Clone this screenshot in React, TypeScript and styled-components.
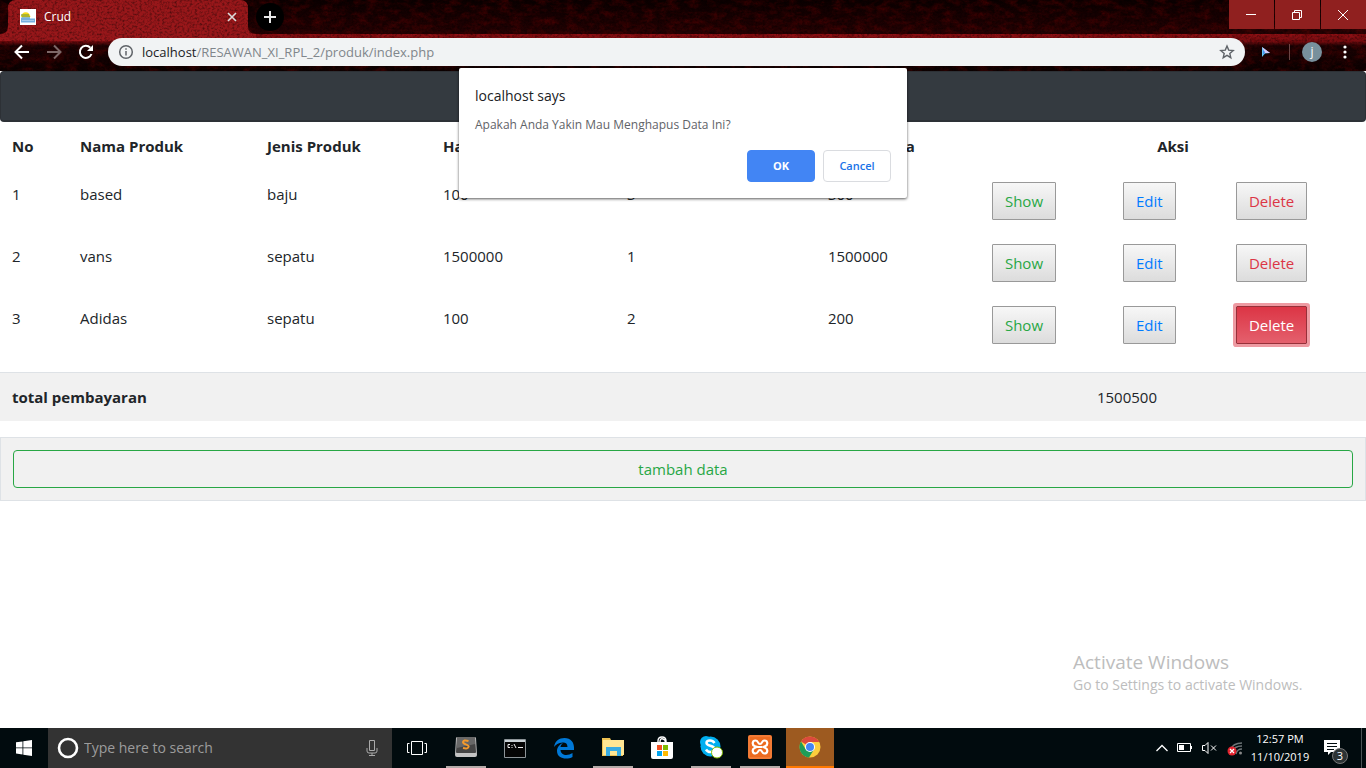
import React from "react";
import styled, { createGlobalStyle, css } from "styled-components";

const Global = createGlobalStyle`
  * { box-sizing: border-box; }
  body { margin: 0; background: #fff; color: #212529; font: 15px/24px "Open Sans", "Noto Sans", sans-serif; }
  button, input { font: inherit; }
`;

const Desktop = styled.div`
  min-height: 100vh;
  display: flex;
  flex-direction: column;
`;

/* Browser frame */
const Chrome = styled.header`
  position: relative;
  background: #120102;
  color: #fff;
`;
const Texture = styled.svg`
  position: absolute;
  inset: 0;
  width: 100%;
  height: 100%;
`;
const TabStrip = styled.div`
  position: relative;
  display: flex;
  height: 34px;
  padding-left: 8px;
`;
const Tab = styled.div`
  display: flex;
  align-items: center;
  width: 240px;
  padding: 0 10px 0 12px;
  gap: 8px;
  font-size: 12px;
`;
const TabTitle = styled.span`
  flex: 1;
`;
const PlainButton = styled.button`
  display: flex;
  align-items: center;
  justify-content: center;
  padding: 0;
  border: 0;
  background: none;
  color: inherit;
`;
const NewTab = styled(PlainButton)`
  width: 28px;
  height: 28px;
  margin: 3px 0 0 8px;
  border-radius: 50%;
  background: #000;
`;
const WindowControls = styled.div`
  display: flex;
  gap: 1px;
  margin-left: auto;
`;
const WindowButton = styled(PlainButton)`
  width: 45px;
  height: 29px;
  padding-right: 2px;
  background: #90201f;
`;
const Toolbar = styled.div`
  position: relative;
  display: flex;
  align-items: center;
  height: 37px;
  padding: 0 13px 1px 14px;
`;
const NavButtons = styled.div`
  display: flex;
  gap: 16px;
  margin-right: 14px;
`;
const AddressBar = styled.div`
  display: flex;
  flex: 1;
  align-items: center;
  height: 28px;
  padding: 0 10px;
  border-radius: 14px;
  background: #f1f3f4;
  color: #5f6368;
`;
const Address = styled.div`
  flex: 1;
  margin-left: 8px;
  color: #80868b;
  font-size: 13px;
  span { color: #202124; }
`;
const Avatar = styled(PlainButton)`
  width: 20px;
  height: 20px;
  border-radius: 50%;
  background: #78909c;
  font-size: 12px;
  line-height: 20px;
`;
const Divider = styled.span`
  width: 1px;
  height: 16px;
  margin: 0 12px 0 16px;
  background: #6b4645;
`;
const MenuButton = styled(PlainButton)`
  width: 4px;
  margin: 0 6px 0 21px;
`;

/* Page */
const Page = styled.main`
  position: relative;
  display: flex;
  flex: 1;
  flex-direction: column;
`;
const Navbar = styled.nav`
  height: 51px;
  border: 1px solid #2d3136;
  border-bottom-width: 2px;
  border-radius: 4px;
  background: #343a40;
`;
const Table = styled.table`
  width: 100%;
  margin-bottom: 16px;
  border-collapse: collapse;
  table-layout: fixed;
  th, td { padding: 12px; text-align: left; vertical-align: top; }
  th { font-weight: 700; }
`;
const TotalTable = styled(Table)`
  background: #f1f1f1;
  border-top: 1px solid #dee2e6;
  td { text-align: center; }
`;
const CenterHead = styled.th`
  && { text-align: center; }
`;
const tones = { show: "#28a745", edit: "#007bff", remove: "#dc3545" };
const ActionButton = styled.button<{ $tone: keyof typeof tones; $focused?: boolean }>`
  height: 38px;
  padding: 0 12px;
  display: block;
  border: 1px solid #999;
  border-radius: 1px;
  background: linear-gradient(#f7f7f7, #dcdcdc);
  color: ${(p) => tones[p.$tone]};
  ${(p) =>
    p.$focused &&
    css`
      border-color: #963039;
      background: linear-gradient(#dc3545, #e4606d);
      box-shadow: 0 0 0 3px #ee9aa2;
      color: #fff;
    `}
`;
const AddPanel = styled.section`
  padding: 12px;
  border: 1px solid #dee2e6;
  background: #f1f1f1;
`;
const AddButton = styled.button`
  width: 100%;
  height: 38px;
  display: block;
  border: 1px solid #28a745;
  border-radius: 4px;
  background: none;
  color: #28a745;
`;
const Watermark = styled.aside`
  position: absolute;
  right: 57px;
  bottom: 33px;
  width: 236px;
  color: #bdbdbd;
  font-size: 14px;
  line-height: 20px;
  h2 { margin: 0; font-size: 19px; line-height: 26px; font-weight: 400; }
  p { margin: 0; }
`;

/* Confirm dialog */
const Dialog = styled.div`
  position: absolute;
  z-index: 2;
  top: -3px;
  left: 50%;
  width: 448px;
  padding: 16px;
  transform: translateX(-50%);
  border-radius: 2px;
  background: #fff;
  box-shadow: 0 1px 3px rgba(0, 0, 0, 0.65);
  h1 { margin: 0; color: #202124; font-size: 14px; line-height: 24px; font-weight: 400; }
  p { margin: 5px 0 13px; color: #5f6368; font-size: 12px; line-height: 24px; }
`;
const DialogActions = styled.div`
  display: flex;
  justify-content: flex-end;
  gap: 8px;
`;
const DialogButton = styled.button<{ $primary?: boolean }>`
  width: 68px;
  height: 32px;
  padding: 0;
  border: 1px solid ${(p) => (p.$primary ? "#4285f4" : "#dadce0")};
  border-radius: 4px;
  background: ${(p) => (p.$primary ? "#4285f4" : "#fff")};
  color: ${(p) => (p.$primary ? "#fff" : "#1a73e8")};
  font-size: 11px;
  font-weight: ${(p) => (p.$primary ? 700 : 600)};
`;

/* Taskbar */
const Taskbar = styled.footer`
  display: flex;
  height: 40px;
  background: #010b0e;
  color: #fff;
`;
const TaskButton = styled(PlainButton)<{ $open?: boolean; $active?: boolean }>`
  width: 49px;
  padding: 0 4px 0 5px;
  flex-direction: column;
  svg { margin: auto; }
  ${(p) => p.$open && css`&::after { content: ""; width: 40px; height: 2px; background: #b3aaa8; }`}
  ${(p) =>
    p.$active &&
    css`
      margin-left: 2px;
      background: #9d5a20;
      width: 48px;
      padding: 0;
      &::after { content: ""; width: 48px; height: 2px; background: #ff7800; }
    `}
`;
const StartButton = styled(PlainButton)`
  width: 48px;
`;
const Search = styled.label`
  display: flex;
  align-items: center;
  width: 344px;
  padding: 0 12px 0 9px;
  gap: 5px;
  background: #333;
  input {
    flex: 1;
    min-width: 0;
    padding: 0;
    border: 0;
    outline: 0;
    background: none;
    color: #fff;
    font-size: 14px;
  }
  input::placeholder { color: #9c9c9c; opacity: 1; }
`;
const Apps = styled.nav`
  display: flex;
`;
const Tray = styled.div`
  display: flex;
  align-items: center;
  margin-left: auto;
  margin-right: 4px;
  padding-right: 13px;
  border-right: 1px solid #4a5355;
`;
const TrayIcons = styled.div`
  display: flex;
  align-items: center;
  gap: 9px;
`;
const Clock = styled.time`
  width: 66px;
  margin: 0 11px 0 4px;
  text-align: center;
  font-size: 11px;
  line-height: 18px;
`;
const Notifications = styled(PlainButton)`
  position: relative;
  width: 24px;
  height: 24px;
  justify-content: flex-start;
`;
const Badge = styled.span`
  position: absolute;
  right: 0;
  bottom: -4px;
  width: 16px;
  height: 16px;
  border: 1px solid #777;
  border-radius: 50%;
  background: #2c3335;
  font-size: 11px;
  line-height: 14px;
`;

const rows = [
  { name: "based", kind: "baju", price: 100, count: 3, total: 300 },
  { name: "vans", kind: "sepatu", price: 1500000, count: 1, total: 1500000 },
  { name: "Adidas", kind: "sepatu", price: 100, count: 2, total: 200 },
];
const columnWidths = ["4.98%", "13.69%", "12.88%", "13.47%", "14.71%", "12.01%", "9.59%", "8.27%", "10.4%"];

/* Dark red leather theme behind the tab strip and toolbar */
const Leather = () => (
  <Texture aria-hidden="true">
    <defs>
      <filter id="grain" x="0" y="0" width="100%" height="100%" colorInterpolationFilters="sRGB">
        <feTurbulence type="fractalNoise" baseFrequency="0.4 0.5" numOctaves="3" seed="8" />
        <feColorMatrix values="0 0 0 0 0  0 0 0 0 0  0 0 0 0 0  2 0 0 0 -0.85" />
      </filter>
      <filter id="veins" x="0" y="0" width="100%" height="100%" colorInterpolationFilters="sRGB">
        <feTurbulence type="fractalNoise" baseFrequency="0.09 0.16" numOctaves="5" seed="3" />
        <feColorMatrix values="0 0 0 0 0.36  0 0 0 0 0.01  0 0 0 0 0.01  2 0 0 0 -0.8" />
      </filter>
      <linearGradient id="strip" x1="0" y1="0" x2="0" y2="1">
        <stop offset="0" stopColor="#0b0001" />
        <stop offset="1" stopColor="#240203" />
      </linearGradient>
      <linearGradient id="band" x1="0" y1="0" x2="0" y2="1">
        <stop offset="0" stopColor="#8f1014" />
        <stop offset="0.2" stopColor="#7a0d11" />
        <stop offset="0.32" stopColor="#1c0203" />
        <stop offset="1" stopColor="#0c0101" />
      </linearGradient>
    </defs>
    <rect width="100%" height="34" fill="url(#strip)" />
    <rect y="34" width="100%" height="37" fill="url(#band)" />
    <rect width="100%" height="100%" filter="url(#veins)" opacity="0.6" />
    <path d="M0 34Q8 34 8 26V8Q8 0 16 0H240Q248 0 248 8V26Q248 34 256 34V41H0Z" fill="#98171a" />
    <rect width="100%" height="100%" filter="url(#grain)" opacity="0.5" />
  </Texture>
);

const Favicon = () => (
  <svg width="16" height="16" viewBox="0 0 16 16">
    <path fill="#fff" d="M0 0h16v16H0z" />
    <path d="M1 8a4.700 4.700 0 0 1 9.400 0z" fill="#f5dc18" />
    <path d="M1 6h8M2 8h8" stroke="#658b45" />
    <path d="M1 8.500h9v1h5v4H1z" fill="#75afe0" />
    <path d="M2 11.500h12" stroke="#a7ccec" />
  </svg>
);

const AppIcon = ({ name }: { name: string }) => {
  switch (name) {
    case "Task View":
      return (
        <svg width="20" height="14" viewBox="0 0 20 14" fill="none" stroke="#fff">
          <path d="M4.500 .5h11v13h-11zM2.500 2.500h-2v9h2M17.500 2.500h2v9h-2" />
        </svg>
      );
    case "Sublime Text":
      return (
        <svg width="24" height="22" viewBox="0 0 24 22">
          <path d="M2 2Q2 1 4 1H20Q22 1 22 2L23 19Q23 21 21 21H3Q1 21 1 19Z" fill="#c4c4c4" />
          <path d="M3 1H21L22 16Q22 17 21 17H3Q2 17 2 16Z" fill="#454545" />
          <path d="M3 1H21L21 8L3 12Z" fill="#686868" />
          <path d="M14.500 5Q9.500 3.500 9 6C8.700 8.600 14.800 8 14.700 10.700Q14.300 13.300 9 12" fill="none" stroke="#f49a2c" strokeWidth="1.900" />
        </svg>
      );
    case "Command Prompt":
      return (
        <svg width="22" height="19" viewBox="0 0 22 19">
          <path d="M.5 .5h21v18H.5z" fill="#050505" stroke="#8d9498" />
          <path d="M1 1h20v2H1z" fill="#c9d1d5" />
          <path d="M6 5.500H4v3h2M8 6v1M8 8v1M10 5l2 4M14 8.500h5" fill="none" stroke="#eee" />
        </svg>
      );
    case "Edge":
      return (
        <svg width="22" height="22" viewBox="0 0 22 22">
          <path d="M1 10C2 4 6 1 11.500 1C18 1 21 5.500 21 10.500V13H7.500C8 19 15 19 19.500 16V20C14 23 4 22 4 14C4 10 7 7 10 6Q7.500 8 7.400 10H14.500C14.500 6.500 12.500 5.300 9.500 5.500C5.500 5.600 2.500 8 1 10Z" fill="#0078d7" />
        </svg>
      );
    case "File Explorer":
      return (
        <svg width="22" height="20" viewBox="0 0 22 20">
          <path d="M0 1h8l1 2h12v16H0z" fill="#efc252" />
          <path d="M1 3h21v15H1z" fill="#ffe694" />
          <path d="M4 10h15v9h-4v-5H8v5H4z" fill="#38abe2" />
        </svg>
      );
    case "Store":
      return (
        <svg width="24" height="24" viewBox="0 0 24 24">
          <path d="M8 7V5Q8 1 12 1T16 5V7M10 6Q10 2 13 3T15 7" fill="none" stroke="#fff" strokeWidth="1.400" />
          <path d="M1 6h22v15q0 2-2 2H3q-2 0-2-2z" fill="#fff" />
          <path d="M7 9h5v5H7z" fill="#f25022" />
          <path d="M13 9h5v5h-5z" fill="#7fba00" />
          <path d="M7 15h5v5H7z" fill="#00a4ef" />
          <path d="M13 15h5v5h-5z" fill="#ffb900" />
        </svg>
      );
    case "Skype":
      return (
        <svg width="24" height="24" viewBox="0 0 24 24">
          <circle cx="7" cy="7" r="6" fill="#00aff0" />
          <circle cx="11.500" cy="11.500" r="10" fill="#00aff0" />
          <path d="M15.500 8Q14 5.500 11 5.500Q7.500 5.500 7.500 8C7.500 11.500 15.500 10 15.500 14Q15.500 17 11.500 17Q8.500 17 7 14.500" fill="none" stroke="#fff" strokeWidth="2.500" />
          <circle cx="18" cy="17.500" r="5.500" fill="#fff" stroke="#7fba00" />
        </svg>
      );
    case "XAMPP":
      return (
        <svg width="24" height="24" viewBox="0 0 24 24">
          <rect width="24" height="24" rx="2" fill="#ec6b20" />
          <rect x="1" y="1" width="22" height="22" rx="1" fill="none" stroke="#f58a4b" />
          <path d="M10 12H14M10 12C8.500 12 8 11.500 6.500 11C4 10 4 5.500 7.500 5.500C10.500 5.500 9.500 9 12 9C14.500 9 13.500 5.500 16.500 5.500C20 5.500 20 10 17.500 11L15.500 12L17.500 13C20 14 20 18.500 16.500 18.500C13.500 18.500 14.500 15 12 15C9.500 15 10.500 18.500 7.500 18.500C4 18.500 4 14 6.500 13L8.500 12" fill="none" stroke="#fff" strokeWidth="2.200" />
        </svg>
      );
    case "Chrome":
      return (
        <svg width="22" height="22" viewBox="0 0 22 22">
          <circle cx="11" cy="11" r="10.500" fill="#fccd3d" />
          <path d="M11 11L2 5.500A10.500 10.500 0 0 1 20.300 6H11Z" fill="#dc4a3d" />
          <path d="M2 5.500A10.500 10.500 0 0 0 10 21.500L15 13.500L11 15L6.500 13Z" fill="#1e9d58" />
          <circle cx="11" cy="11" r="5" fill="#fff" />
          <circle cx="11" cy="11" r="4" fill="#4285f4" />
        </svg>
      );
    default:
      return null;
  }
};

const apps = [
  { name: "Task View" },
  { name: "Sublime Text", open: true },
  { name: "Command Prompt" },
  { name: "Edge" },
  { name: "File Explorer", open: true },
  { name: "Store" },
  { name: "Skype", open: true },
  { name: "XAMPP", open: true },
  { name: "Chrome", active: true },
];

const BrowserFrame = () => (
  <Chrome>
    <Leather />
    <TabStrip>
      <Tab>
        <Favicon />
        <TabTitle>Crud</TabTitle>
        <PlainButton aria-label="Close tab">
          <svg width="12" height="12" viewBox="0 0 12 12" stroke="#ddd" strokeWidth="1.600"><path d="M2 2l8 8M10 2l-8 8" /></svg>
        </PlainButton>
      </Tab>
      <NewTab aria-label="New tab">
        <svg width="12" height="12" viewBox="0 0 12 12" stroke="#e8e8e8" strokeWidth="2"><path d="M6 0v12M0 6h12" /></svg>
      </NewTab>
      <WindowControls>
        <WindowButton aria-label="Minimize">
          <svg width="10" height="10" stroke="#fff"><path d="M0 4.500h10" /></svg>
        </WindowButton>
        <WindowButton aria-label="Restore">
          <svg width="10" height="10" stroke="#fff" fill="none"><path d="M.5 2.500h7v7h-7zM2.500 2.500v-2h7v7h-2" /></svg>
        </WindowButton>
        <WindowButton aria-label="Close">
          <svg width="10" height="10" stroke="#fff"><path d="M0 0l10 10M10 0L0 10" /></svg>
        </WindowButton>
      </WindowControls>
    </TabStrip>
    <Toolbar>
      <NavButtons>
        <PlainButton aria-label="Back">
          <svg width="16" height="16" viewBox="0 0 16 16" fill="none" stroke="#fff" strokeWidth="2"><path d="M15 8H2M8 1.500L1.500 8L8 14.500" /></svg>
        </PlainButton>
        <PlainButton aria-label="Forward">
          <svg width="16" height="16" viewBox="0 0 16 16" fill="none" stroke="#7d6868" strokeWidth="2"><path d="M1 8H14M8 1.500L14.500 8L8 14.500" /></svg>
        </PlainButton>
        <PlainButton aria-label="Reload">
          <svg width="16" height="16" viewBox="0 0 16 16"><path d="M13.500 10A6 6 0 1 1 12.300 3.800" fill="none" stroke="#fff" strokeWidth="2" /><path d="M15 1v6H9z" fill="#fff" /></svg>
        </PlainButton>
      </NavButtons>
      <AddressBar>
        <svg width="16" height="16" viewBox="0 0 16 16" fill="none" stroke="currentColor" strokeWidth="1.500"><circle cx="8" cy="8" r="6.300" /><path d="M8 7v4.500M8 4.200v1.600" /></svg>
        <Address><span>localhost</span>/RESAWAN_XI_RPL_2/produk/index.php</Address>
        <PlainButton aria-label="Bookmark">
          <svg width="16" height="16" viewBox="0 0 16 16" fill="none" stroke="currentColor" strokeWidth="1.400"><path d="M8 2l1.700 4.100 4.500.4-3.400 2.900 1 4.300L8 11.400l-3.800 2.300 1-4.300-3.400-2.900 4.500-.4z" /></svg>
        </PlainButton>
      </AddressBar>
      <PlainButton aria-label="Extension">
        <svg width="28" height="12" viewBox="0 0 28 12"><path d="M17 1v10l3-3.500L25 7z" fill="#66c9f5" /><path d="M17 1l8 6H20" fill="#d9c8f7" /><path d="M18 4v5l2-3z" fill="#4b8ff0" /></svg>
      </PlainButton>
      <Divider />
      <Avatar aria-label="Profile">j</Avatar>
      <MenuButton aria-label="Menu">
        <svg width="4" height="14" viewBox="0 0 4 14" fill="#fff"><circle cx="2" cy="2" r="1.600" /><circle cx="2" cy="7" r="1.600" /><circle cx="2" cy="12" r="1.600" /></svg>
      </MenuButton>
    </Toolbar>
  </Chrome>
);

export default function App() {
  return (
    <Desktop>
      <Global />
      <BrowserFrame />
      <Page>
        <Navbar />
        <Table>
          <colgroup>{columnWidths.map((w, i) => <col key={i} width={w} />)}</colgroup>
          <thead>
            <tr>
              <th>No</th>
              <th>Nama Produk</th>
              <th>Jenis Produk</th>
              <th>Harga</th>
              <th>Jumlah</th>
              <th>Total Harga</th>
              <CenterHead colSpan={3}>Aksi</CenterHead>
            </tr>
          </thead>
          <tbody>
            {rows.map((row, i) => (
              <tr key={row.name}>
                <td>{i + 1}</td>
                <td>{row.name}</td>
                <td>{row.kind}</td>
                <td>{row.price}</td>
                <td>{row.count}</td>
                <td>{row.total}</td>
                <td><ActionButton $tone="show">Show</ActionButton></td>
                <td><ActionButton $tone="edit">Edit</ActionButton></td>
                <td><ActionButton $tone="remove" $focused={i === 2}>Delete</ActionButton></td>
              </tr>
            ))}
          </tbody>
        </Table>
        <TotalTable>
          <colgroup><col width="65%" /><col width="35%" /></colgroup>
          <tbody>
            <tr>
              <th>total pembayaran</th>
              <td>1500500</td>
            </tr>
          </tbody>
        </TotalTable>
        <AddPanel><AddButton>tambah data</AddButton></AddPanel>
        <Dialog role="dialog" aria-labelledby="dialog-title">
          <h1 id="dialog-title">localhost says</h1>
          <p>Apakah Anda Yakin Mau Menghapus Data Ini?</p>
          <DialogActions>
            <DialogButton $primary>OK</DialogButton>
            <DialogButton>Cancel</DialogButton>
          </DialogActions>
        </Dialog>
        <Watermark>
          <h2>Activate Windows</h2>
          <p>Go to Settings to activate Windows.</p>
        </Watermark>
      </Page>
      <Taskbar>
        <StartButton aria-label="Start">
          <svg width="16" height="16" viewBox="0 0 16 16" fill="#fff"><path d="M0 2.300L6.500 1.400V7.500H0zM7.300 1.300L16 0V7.500H7.300zM0 8.300H6.500V14.500L0 13.600zM7.300 8.300H16V16L7.300 14.700z" /></svg>
        </StartButton>
        <Search>
          <svg width="22" height="22" viewBox="0 0 22 22"><circle cx="11" cy="11" r="9" fill="none" stroke="#fff" strokeWidth="2.600" /></svg>
          <input aria-label="Search" placeholder="Type here to search" />
          <svg width="16" height="18" viewBox="0 0 16 18" fill="none" stroke="#aaa"><path d="M5.500 1.500h5v10h-5zM3 9v3q0 2 2 2h6q2 0 2-2V9M8 14v2.500M5 16.500h6" /></svg>
        </Search>
        <Apps>
          {apps.map((app) => (
            <TaskButton key={app.name} aria-label={app.name} $open={app.open} $active={app.active}>
              <AppIcon name={app.name} />
            </TaskButton>
          ))}
        </Apps>
        <Tray>
          <TrayIcons>
            <svg width="12" height="8" viewBox="0 0 12 8" fill="none" stroke="#fff" strokeWidth="1.300"><path d="M.5 7L6 1.500L11.500 7" /></svg>
            <svg width="16" height="10" viewBox="0 0 16 10"><path d="M.5 .5h13v8H.5zM14.500 3v3" fill="none" stroke="#fff" /><path d="M2 2h5v5H2z" fill="#fff" /></svg>
            <svg width="16" height="14" viewBox="0 0 16 14" fill="none" stroke="#fff"><path d="M.5 4.500h2.500L6 1.500v11L3 9.500H.5zM9 4.500l5 5M14 4.500l-5 5" /></svg>
            <svg width="16" height="16" viewBox="0 0 16 16"><path d="M3 10Q6 3 15 3M5 12Q7 6 15 6M9 14Q10 9 15 9" fill="none" stroke="#6d7577" strokeWidth="1.300" /><circle cx="13.500" cy="13" r="1.500" fill="#888" /><circle cx="5" cy="11" r="4.500" fill="#e2232e" /><path d="M3 9l4 4M7 9l-4 4" stroke="#fff" strokeWidth="1.200" /></svg>
          </TrayIcons>
          <Clock>12:57 PM<br />11/10/2019</Clock>
          <Notifications aria-label="Notifications">
            <svg width="16" height="16" viewBox="0 0 16 16"><path d="M0 0h16v12H7l-3 3v-3H0z" fill="#fff" /><path d="M3 3.500h10M3 6.500h10M3 9.500h7" stroke="#010b0e" /></svg>
            <Badge>3</Badge>
          </Notifications>
        </Tray>
      </Taskbar>
    </Desktop>
  );
}
